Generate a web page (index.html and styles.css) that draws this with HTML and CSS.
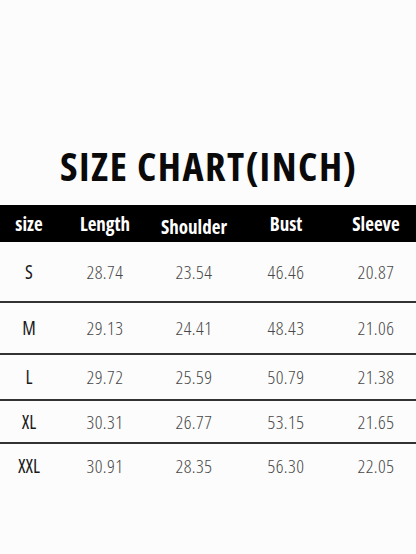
FILE: index.html
```html
<!DOCTYPE html>
<html>
<head>
<meta charset="utf-8">
<link rel="stylesheet" href="styles.css">
</head>
<body>
<div class="page">
  <h1 class="title">SIZE CHART(INCH)</h1>
  <div class="table">
    <div class="row head">
      <div class="cell">size</div>
      <div class="cell">Length</div>
      <div class="cell shoulder">Shoulder</div>
      <div class="cell">Bust</div>
      <div class="cell">Sleeve</div>
    </div>
    <div class="row r-s">
      <div class="cell sz">S</div>
      <div class="cell num">28.74</div>
      <div class="cell num">23.54</div>
      <div class="cell num">46.46</div>
      <div class="cell num">20.87</div>
    </div>
    <div class="row r-m">
      <div class="cell sz">M</div>
      <div class="cell num">29.13</div>
      <div class="cell num">24.41</div>
      <div class="cell num">48.43</div>
      <div class="cell num">21.06</div>
    </div>
    <div class="row r-l">
      <div class="cell sz">L</div>
      <div class="cell num">29.72</div>
      <div class="cell num">25.59</div>
      <div class="cell num">50.79</div>
      <div class="cell num">21.38</div>
    </div>
    <div class="row r-xl">
      <div class="cell sz">XL</div>
      <div class="cell num">30.31</div>
      <div class="cell num">26.77</div>
      <div class="cell num">53.15</div>
      <div class="cell num">21.65</div>
    </div>
    <div class="row r-xxl last">
      <div class="cell sz">XXL</div>
      <div class="cell num">30.91</div>
      <div class="cell num">28.35</div>
      <div class="cell num">56.30</div>
      <div class="cell num">22.05</div>
    </div>
  </div>
</div>
</body>
</html>
```
FILE: styles.css
```css
html, body {
  margin: 0;
  padding: 0;
  background: #fcfcfc;
}
.page {
  width: 416px;
  height: 554px;
  padding-top: 139px;
  box-sizing: border-box;
}
.title {
  margin: 0;
  text-align: center;
  font-family: "Open Sans", "DejaVu Sans Condensed", sans-serif;
  font-stretch: 75%;
  font-weight: 700;
  font-size: 40px;
  line-height: 54px;
  color: #0a0a0a;
  letter-spacing: 1.5px;
  text-indent: 1.5px;
}
.table {
  margin-top: 12px;
}
.row {
  display: grid;
  grid-template-columns: 58px 94px 84px 100px 80px;
  align-items: center;
  border-bottom: 2px solid #333;
}
.row.last {
  border-bottom: none;
}
.cell {
  text-align: center;
}
.head {
  background: #000;
  height: 37px;
  border-bottom: none;
}
.head .cell {
  color: #fff;
  font-family: "Open Sans", sans-serif;
  font-stretch: 75%;
  font-weight: 700;
  font-size: 19px;
  line-height: 24px;
}
.head .shoulder {
  padding-top: 7px;
}
.sz {
  font-family: "Open Sans", sans-serif;
  font-stretch: 75%;
  font-weight: 500;
  font-size: 19px;
  color: #1a1a1a;
}
.num {
  font-family: "Open Sans", sans-serif;
  font-stretch: 75%;
  font-weight: 300;
  font-size: 19px;
  letter-spacing: 0.5px;
  color: #484848;
}
.r-s { height: 59px; }
.r-m { height: 50px; }
.r-l { height: 44px; }
.r-xl { height: 41px; }
.r-xxl { height: 44px; }
```
